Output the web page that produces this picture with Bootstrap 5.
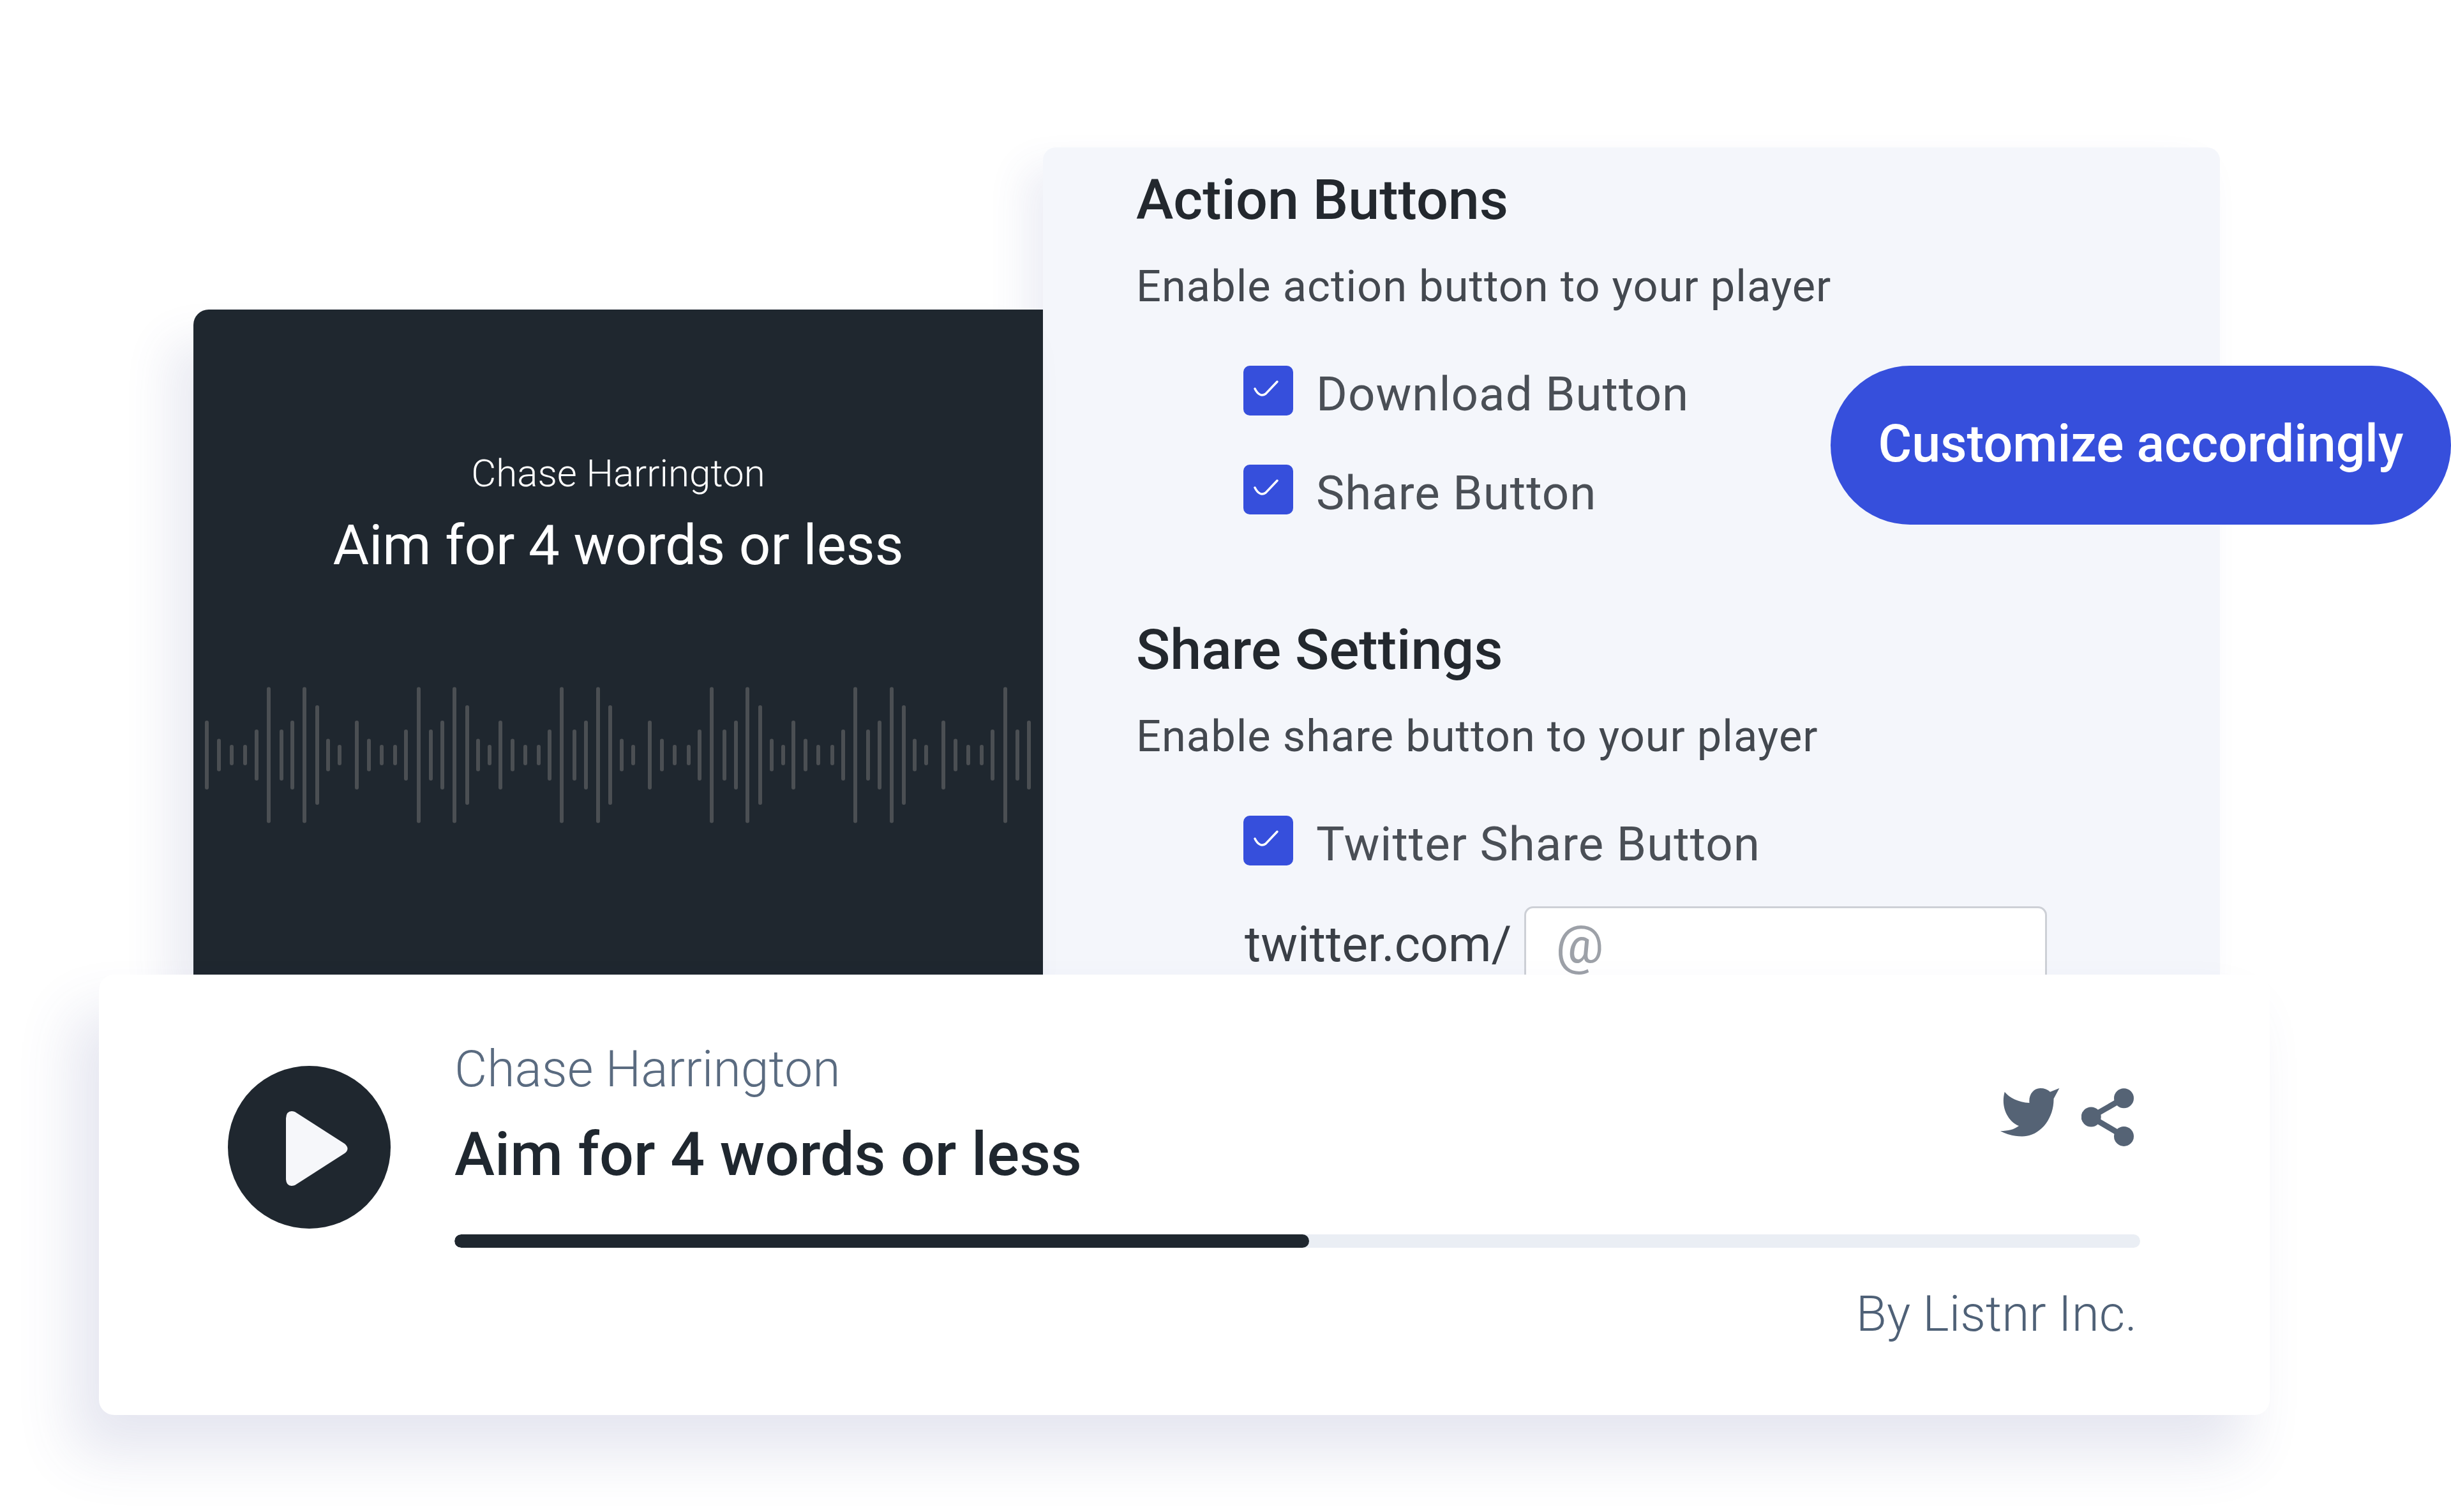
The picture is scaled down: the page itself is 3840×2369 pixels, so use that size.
<!DOCTYPE html>
<html lang="en">
<head>
  <meta charset="UTF-8">
  <title>Player customization</title>
  <link href="https://cdn.jsdelivr.net/npm/bootstrap@5.3.0/dist/css/bootstrap.min.css" rel="stylesheet">
  <style>
    html, body { background: #fff; height: 100%; overflow: hidden; }
    body { font-family: Roboto, "Liberation Sans", sans-serif; color: #1f272f; }
    .stage { position: relative; width: 3840px; height: 2369px; padding-top: 231px; padding-left: 155px; overflow: hidden; }

    .panels { margin-left: 148px; width: 3175px; height: 1296px; }
    .dark-panel { width: 1331px; height: 1042px; margin-top: auto; background: #1f272f; color: #fff; border-radius: 24px 0 0 0; padding-top: 222px; box-shadow: -40px 50px 70px rgba(70, 80, 150, .11); z-index: 1; }
    .dark-author { font-size: 60px; font-weight: 300; line-height: 70px; }
    .dark-title { font-size: 87px; font-weight: 400; line-height: 100px; margin-top: 27px; }
    .wave { display: block; width: 1331px; height: 214px; margin-top: 172px; }

    .light-panel { flex: 1; background: #f4f6fb; border-radius: 20px 20px 0 0; padding: 32px 0 0 146px; overflow: hidden; box-shadow: -30px 30px 60px rgba(70, 80, 150, .09); }
    .sec-title { font-size: 88px; font-weight: 500; line-height: 100px; color: #23282e; margin: 0; }
    .sec-title-next { margin-top: 162px; }
    .sec-sub { font-size: 68.6px; line-height: 80px; color: #43484f; margin: 46px 0 0; letter-spacing: 1px; }
    .opt-row { height: 78px; padding-left: 168px; }
    .opt-first { margin-top: 84px; }
    .opt-next { margin-top: 77px; }
    .form-check-input.opt-box { width: 78px; height: 78px; margin: 0; border: 0; border-radius: 10px; background-color: #364fdc; background-size: 78px 78px; background-image: url("data:image/svg+xml,%3csvg xmlns='http://www.w3.org/2000/svg' viewBox='0 0 78 78'%3e%3cpath d='M18 36c5 10 11 12 17 8l18-19' fill='none' stroke='%23fff' stroke-width='3.5' stroke-linecap='round'/%3e%3c/svg%3e"); flex: none; }
    .opt-label { font-size: 74.5px; line-height: 78px; color: #4a4f56; margin: 12px 0 0 36px; letter-spacing: 1px; }
    .twitter-row { padding-left: 168px; margin-top: 64px; }
    .twitter-prefix { font-size: 77px; color: #3a3f46; line-height: 90px; margin: 15px 20px 0 2px; }
    .form-control.twitter-input { width: 819px; height: 170px; border: 3px solid #cdd0d6; border-radius: 14px; font-size: 84px; line-height: 100px; padding: 0 46px 50px; background: #fff; }
    .twitter-input::placeholder { color: #9da1a8; }

    .pill-note { position: absolute; left: 2868px; top: 573px; width: 972px; height: 249px; border-radius: 125px; background: #364fdc; color: #fff; font-size: 80.7px; font-weight: 500; padding-bottom: 4px; }

    .player-card { width: 3401px; height: 690px; background: #fff; border-radius: 24px; padding: 143px 203px 0 202px; box-shadow: -40px 60px 90px rgba(70, 80, 150, .14); position: relative; z-index: 2; }
    .play-btn { width: 255px; height: 255px; flex: none; margin-right: 100px; }
    .player-body { min-width: 0; }
    .player-author { font-size: 78.8px; font-weight: 300; line-height: 90px; color: #5a6b80; margin-top: -40px; }
    .player-title { font-size: 95px; font-weight: 500; line-height: 110px; color: #1f272f; margin-top: 34px; }
    .player-icons { gap: 34px; margin: 35px 10px 0 0; }
    .progress.seek-track { height: 21px; border-radius: 11px; background: #eaeef4; margin-top: 70px; }
    .progress-bar.seek-fill { background: #1f272f; border-radius: 11px; }
    .player-credit { font-size: 78.4px; font-weight: 300; line-height: 90px; color: #4f6177; margin: 58px 5px 0 0; }
  </style>
</head>
<body>
  <div class="stage">
    <div class="panels d-flex">
      <div class="dark-panel text-center">
        <div class="dark-author">Chase Harrington</div>
        <div class="dark-title">Aim for 4 words or less</div>
        <svg class="wave" id="wave" viewBox="0 0 1331 214"></svg>
      </div>
      <div class="light-panel">
        <h2 class="sec-title">Action Buttons</h2>
        <p class="sec-sub">Enable action button to your player</p>
        <div class="opt-row opt-first d-flex align-items-center">
          <input class="form-check-input opt-box" type="checkbox" checked>
          <span class="opt-label">Download Button</span>
        </div>
        <div class="opt-row opt-next d-flex align-items-center">
          <input class="form-check-input opt-box" type="checkbox" checked>
          <span class="opt-label">Share Button</span>
        </div>
        <h2 class="sec-title sec-title-next">Share Settings</h2>
        <p class="sec-sub">Enable share button to your player</p>
        <div class="opt-row opt-first d-flex align-items-center">
          <input class="form-check-input opt-box" type="checkbox" checked>
          <span class="opt-label">Twitter Share Button</span>
        </div>
        <div class="twitter-row d-flex align-items-start">
          <span class="twitter-prefix">twitter.com/</span>
          <input class="form-control twitter-input" type="text" placeholder="@">
        </div>
      </div>
    </div>

    <div class="player-card d-flex">
      <svg class="play-btn" viewBox="0 0 255 255">
        <circle cx="127.5" cy="127.5" r="127.5" fill="#1f272f"/>
        <path d="M91 82v96q1 13 14 9l78-50q9-7 0-15l-78-50q-13-4-14 10z" fill="#f6f7fa"/>
      </svg>
      <div class="player-body flex-fill">
        <div class="d-flex justify-content-between">
          <div>
            <div class="player-author">Chase Harrington</div>
            <div class="player-title">Aim for 4 words or less</div>
          </div>
          <div class="player-icons d-flex align-items-start">
            <svg width="93" height="76" viewBox="0 0 93 76"><path fill="#556375" d="M6.7 5.7C14 15 28 22 45.5 23 44 10 52 0 62.5 0 69 0 74 2 78 5.7L92.4 0 83.5 16.5C84 48 62 76 33.5 75.5 20 75.5 9 72 0 67 12 67 21 65 29 59 12 52 0 30 6.7 5.7Z"/></svg>
            <svg width="82" height="91" viewBox="0 0 82 91">
              <path d="M66.5 15.7 15.2 45 66.5 75.4" fill="none" stroke="#556375" stroke-width="9"/>
              <circle cx="66.5" cy="15.7" r="15.5" fill="#556375"/>
              <circle cx="15.2" cy="45" r="15.5" fill="#556375"/>
              <circle cx="66.5" cy="75.4" r="15.5" fill="#556375"/>
            </svg>
          </div>
        </div>
        <div class="progress seek-track">
          <div class="progress-bar seek-fill" style="width: 50.7%"></div>
        </div>
        <div class="player-credit text-end">By Listnr Inc.</div>
      </div>
    </div>

    <div class="pill-note d-flex align-items-center justify-content-center">Customize accordingly</div>
  </div>

  <script src="https://cdn.jsdelivr.net/npm/bootstrap@5.3.0/dist/js/bootstrap.bundle.min.js"></script>
  <script>
    // bar centres in panel px, read off the reference; heights repeat every 12 bars
    const heights = [108, 51, 32, 32, 80, 213, 80, 108, 213, 156, 51, 32];
    const xs = [23, 42, 62, 83, 101, 120, 140, 157, 176, 196, 213, 231, 258, 277, 297, 318, 335, 355, 374, 392, 411, 431, 448, 466, 483, 502, 522, 543, 560, 579, 599, 617, 636, 655, 673, 691, 717, 736, 756, 778, 795, 814, 834, 852, 870, 890, 908, 926, 942, 961, 981, 1003, 1020, 1039, 1059, 1077, 1096, 1115, 1132, 1150, 1177, 1196, 1216, 1237, 1254, 1274, 1293, 1311];
    let bars = "";
    xs.forEach(function (x, i) {
      const h = heights[i % 12];
      bars += '<rect x="' + (x - 5) + '" y="' + (107 - h / 2) + '" width="6" height="' + h + '" rx="3" fill="#4b4f53"/>';
    });
    document.getElementById("wave").innerHTML = bars;
  </script>
</body>
</html>
